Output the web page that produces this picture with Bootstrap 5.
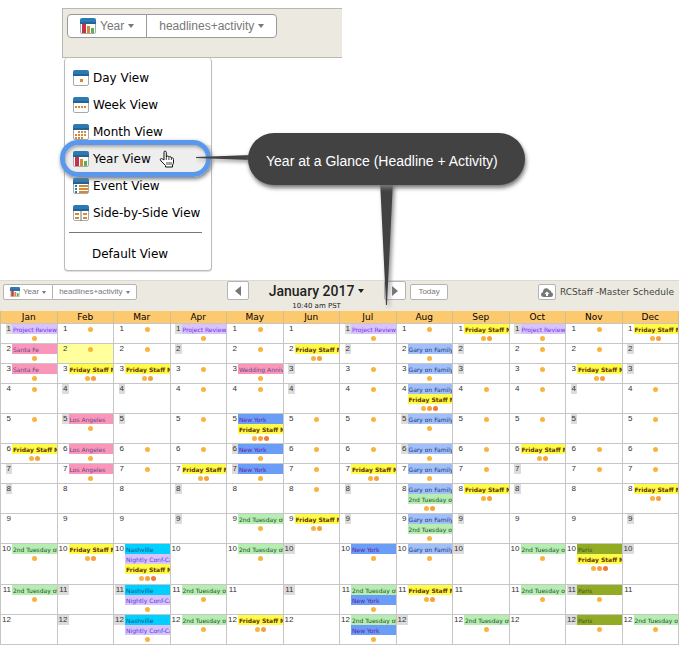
<!DOCTYPE html>
<html lang="en">
<head>
<meta charset="utf-8">
<meta name="viewport" content="width=device-width, initial-scale=1">
<title>Year at a Glance</title>
<link href="https://cdn.jsdelivr.net/npm/bootstrap@5.3.0/dist/css/bootstrap.min.css" rel="stylesheet">
<style>
body{font-family:"DejaVu Sans",sans-serif;color:#000;background:#fff}
.demo-area{padding:8px 0 9px 62px}
.demo-strip{width:280px;height:50px;padding:5px 4px;background:#eceae0;border:1px solid #b9b9b1;border-right:0}
.tool-btn{--bs-btn-padding-x:12px;--bs-btn-padding-y:0px;--bs-btn-font-size:12px;--bs-btn-line-height:22px;--bs-btn-border-radius:4px;
  --bs-btn-color:#777;--bs-btn-bg:#fff;--bs-btn-border-color:#999;--bs-btn-hover-bg:#f4f4f4;--bs-btn-hover-color:#555;--bs-btn-hover-border-color:#888;
  font-family:"Liberation Sans",Arial,sans-serif;display:inline-flex;align-items:center;justify-content:center;gap:4px}
.tool-btn.mini{--bs-btn-padding-x:7px;--bs-btn-font-size:8px;--bs-btn-line-height:14px;--bs-btn-border-radius:2px;--bs-btn-border-color:#b4b4b4;gap:3px}
.btn-group .tool-btn.mini{--bs-btn-padding-x:6px}
.tool-btn.arrow-btn{--bs-btn-line-height:17px;--bs-btn-padding-x:0px;width:22px;height:19px}
.tool-btn.cloud-btn{--bs-btn-padding-x:0px;width:18px;height:16px}
.caret-mark{width:0;height:0;border:3px solid transparent;border-top:4px solid currentColor;border-bottom:0}
.mini .caret-mark{border-width:3px 2px 0}
.ico{width:16px;height:16px;flex:none}
.ico-mini{width:10px;height:10px;flex:none}
.view-menu{width:148px;margin-left:2px;padding:6px 0 3px;background:#fff;border:1px solid #bbb;border-top:0;border-radius:4px;font-size:12px;box-shadow:0 1px 1px #ddd}
.view-menu a{display:flex;align-items:center;gap:4px;height:27px;padding-left:8px;color:#000;text-decoration:none;white-space:nowrap;position:relative}
.view-menu hr{margin:6px 9px 7px 4px;border-top:1px solid #777;opacity:1}
.view-menu a.plain{padding-left:27px}
.view-menu a.picked{background:#eee;z-index:2}
.ring{position:absolute;left:-5px;right:0;top:-5px;bottom:-5px;border:5px solid #5a98ee;border-radius:18px;box-shadow:1px 2px 4px #777,inset 1px 2px 3px #aaa}
.hand{width:16px;height:18px;margin-left:4px}
.callout{position:absolute;left:248px;top:133px;z-index:4;padding:18px 27px 13px 18px;border-radius:26px;background:#424242;color:#fff;
  font:14px/21px "Liberation Sans",Arial,sans-serif;white-space:nowrap;box-shadow:1px 3px 4px #777}
.pointer{position:absolute;z-index:3;left:190px;top:150px;width:220px;height:160px;pointer-events:none;filter:drop-shadow(2px 2px 2px #888)}
.cal-wrap{margin-right:1px}
.cal-bar{background:#eceae0;border-top:1px solid #dcdad2;height:31px;padding:0 5px 0 3px}
.drop-1{margin-top:3px}
.cal-title{font:500 14px/20px Roboto,"Liberation Sans",sans-serif;color:#222}
.cal-time{font-size:7px;line-height:10px;color:#222}
.cal-owner{font-size:9px;line-height:16px;color:#444}
.year-grid{width:100%;table-layout:fixed;border-collapse:collapse}
.year-grid th{height:12px;padding:0;background:#fdc96f;border:1px solid #d3bd92;border-width:0 1px;font-size:9px;line-height:12px;font-weight:400;text-align:center}
.year-grid td{padding:0;border:1px solid #c6c6c6;vertical-align:top}
.cell-in{display:flex;min-height:19px}
.h-mid .cell-in{min-height:29px}
.h-tall .cell-in{min-height:40px}
.day-no{width:11px;flex:none;text-align:right;font:8px/10px "Liberation Sans",Arial,sans-serif;color:#333}
.day-no span{display:inline-block;padding:0 1px}
.weekend .day-no span{background:#dcdcdc}
.today{background:#ffff9c}
.cell-body{flex:1;min-width:0}
.ev{height:10px;padding-left:1px;font-size:6px;line-height:11px;white-space:nowrap;overflow:hidden}
.ev-project{background:#dac3fb;color:#6637ee}
.ev-conf{background:#dac3fb;color:#4b3be6}
.ev-trip{background:#fb96bb;color:#644982}
.ev-staff{background:#fefc48;color:#633500;font-weight:700}
.ev-gary{background:#a1c0f9;color:#1e3472}
.ev-ny{background:#6a9df8;color:#6222a2}
.ev-tue{background:#b6edb1;color:#234c32}
.ev-nash{background:#00d0ff;color:#174a86}
.ev-paris{background:#91ac24;color:#364f20}
.dots{display:flex;justify-content:center;align-items:center;gap:1px;height:9px}
.dots i{width:5px;height:5px;border-radius:50%;background:#f9b440}
.dots i:nth-child(2){background:#f6a03c}
.dots i:nth-child(3){background:#ef7b37}
.dots:first-child{height:11px}
</style>
<script src="https://cdn.jsdelivr.net/npm/bootstrap@5.3.0/dist/js/bootstrap.bundle.min.js"></script>
</head>
<body>
<svg class="d-none" aria-hidden="true">
  <symbol id="i-frame" viewBox="0 0 16 16"><rect x=".5" y="1.5" width="15" height="14" rx="1.5" fill="#fff" stroke="#a9a9a9"/><path d="M0 6V2Q0 0 2 0H14Q16 0 16 2V6Z" fill="#2c7ab2"/><path d="M0 4H16V6H0Z" fill="#236492"/></symbol>
  <symbol id="i-day" viewBox="0 0 16 16"><use href="#i-frame"/><path d="M7 9h3v3H7z" fill="#d18a3c"/></symbol>
  <symbol id="i-week" viewBox="0 0 16 16"><use href="#i-frame"/><path d="M2 9h2v2H2zM5 9h2v2H5zM8 9h2v2H8zM11 9h2v2h-2z" fill="#d18a3c"/></symbol>
  <symbol id="i-month" viewBox="0 0 16 16"><use href="#i-frame"/><path d="M5 7h2v2H5zM8 7h2v2H8zM11 7h2v2h-2zM2 10h2v2H2zM5 10h2v2H5zM8 10h2v2H8zM11 10h2v2h-2zM2 13h2v2H2zM5 13h2v2H5zM8 13h2v2H8z" fill="#d18a3c"/></symbol>
  <symbol id="i-year" viewBox="0 0 16 16"><use href="#i-frame"/><path d="M2 6h4v9H2z" fill="#c5304c"/><path d="M7 8h3v7H7z" fill="#d18a3c"/><path d="M11 10h3v5h-3z" fill="#55b548"/></symbol>
  <symbol id="i-event" viewBox="0 0 16 16"><use href="#i-frame"/><path d="M2 7h2v2H2zM2 10h2v2H2zM2 13h2v2H2z" fill="#2c7ab2"/><path d="M6 7h9v2H6zM6 10h9v2H6zM6 13h9v2H6z" fill="#d18a3c"/></symbol>
  <symbol id="i-side" viewBox="0 0 16 16"><use href="#i-frame"/><path d="M7.5 6h1v10h-1z" fill="#777"/><path d="M2 8h4v2H2zM2 12h4v2H2zM10 8h4v2h-4zM10 12h4v2h-4z" fill="#d18a3c"/></symbol>
</svg>

<main class="position-relative">
  <section class="demo-area">
    <div class="demo-strip">
      <div class="btn-group align-top">
        <button type="button" class="btn tool-btn"><svg class="ico"><use href="#i-year"/></svg>Year<span class="caret-mark"></span></button>
        <button type="button" class="btn tool-btn">headlines+activity<span class="caret-mark"></span></button>
      </div>
    </div>
    <nav class="view-menu" aria-label="Calendar view">
      <a href="#day"><svg class="ico"><use href="#i-day"/></svg>Day View</a>
      <a href="#week"><svg class="ico"><use href="#i-week"/></svg>Week View</a>
      <a href="#month"><svg class="ico"><use href="#i-month"/></svg>Month View</a>
      <a href="#year" class="picked"><span class="ring"></span><svg class="ico"><use href="#i-year"/></svg>Year View
        <svg class="hand" viewBox="0 0 16 18"><path d="M5 10V2.5Q5 1 6 1T7.300 2.500V7Q7.500 6 8.600 6T9.900 7.200Q10.200 6.500 11.200 6.700T12.400 8Q13 7.500 13.800 8T14.500 9.500V12Q14.500 14 13.500 15V17H6.500V15.500L2 11Q.8 9.500 1.600 8.800T3.500 9.100Z" fill="#fff" stroke="#111"/><path d="M7.300 7v3M9.900 7.500v2.500M12.400 8v2M8 12v3M10 12v3M12 12v3" stroke="#111" fill="none" stroke-width=".8"/></svg></a>
      <a href="#event"><svg class="ico"><use href="#i-event"/></svg>Event View</a>
      <a href="#side"><svg class="ico"><use href="#i-side"/></svg>Side-by-Side View</a>
      <hr>
      <a href="#default" class="plain">Default View</a>
    </nav>
  </section>

  <svg class="pointer" viewBox="0 0 220 160" aria-hidden="true"><path d="M6 7L62 5V10L6 8ZM190 30H203L197 155H196Z" fill="#424242"/></svg>
  <div class="callout">Year at a Glance (Headline + Activity)</div>

  <section class="cal-wrap">
    <header class="cal-bar d-flex justify-content-between align-items-start">
      <div class="btn-group drop-1">
        <button type="button" class="btn tool-btn mini"><svg class="ico-mini"><use href="#i-year"/></svg>Year<span class="caret-mark"></span></button>
        <button type="button" class="btn tool-btn mini">headlines+activity<span class="caret-mark"></span></button>
      </div>
      <div class="d-flex align-items-start">
        <button type="button" class="btn tool-btn mini arrow-btn" aria-label="Previous year"><svg width="6" height="10"><path d="M6 0V10L0 5Z" fill="#777"/></svg></button>
        <div class="text-center px-3 mx-1">
          <div class="cal-title d-flex align-items-center gap-1">January 2017<span class="caret-mark"></span></div>
          <div class="cal-time">10:40 am PST</div>
        </div>
        <button type="button" class="btn tool-btn mini arrow-btn" aria-label="Next year"><svg width="6" height="10"><path d="M0 0V10L6 5Z" fill="#777"/></svg></button>
        <button type="button" class="btn tool-btn mini ms-1 drop-1">Today</button>
      </div>
      <div class="d-flex gap-1 drop-1">
        <button type="button" class="btn tool-btn mini cloud-btn" aria-label="Upload"><svg width="12" height="9" viewBox="0 0 12 9"><path d="M3 9Q0 9 0 6.500Q0 4.500 2 4Q2 .5 5.200 .3Q7.500 .2 8.300 2.300Q10 2.200 10.300 4.200Q12 4.800 12 6.500Q12 9 9.500 9Z" fill="#777"/><path d="M6 3.500L8.500 6H7V8H5V6H3.500Z" fill="#fff"/></svg></button>
        <span class="cal-owner">RCStaff -Master Schedule</span>
      </div>
    </header>
    <table class="year-grid">
      <thead><tr id="months"></tr></thead>
      <tbody id="days"></tbody>
    </table>
  </section>
</main>

<script>
const kinds = {
  P:['project','Project Review'], S:['trip','Santa Fe'], L:['trip','Los Angeles'], W:['trip','Wedding Anniv'],
  F:['staff','Friday Staff M'], G:['gary','Gary on Family'], N:['ny','New York'],
  T:['tue','2nd Tuesday of'], V:['nash','Nashville'], C:['conf','Nightly Conf-Ca'], R:['paris','Paris']
};
// One string per day, one entry per month: "#" weekend, "!" today, letters are events, the digit is the activity count.
const rows = [
  '#P1,1,1,#P1,1,,#P1,1,F2,#P1,1,F2',
  'S1,!1,1,#,1,F2,#,G1,#,1,1,#',
  'S1,F2,F2,1,W1,#,1,G1,#,1,F2,#',
  '1,#,#,1,1,#,1,GF3,1,1,#,1',
  '1,#L1,#,1,NF3,1,1,#G1,1,1,#,1',
  'F2,L1,1,1,#N1,1,1,#G1,1,F2,1,1',
  '#,L1,1,F2,#N1,1,F2,G1,1,#,1,1',
  '#,,,#,,1,#,GT2,F2,#,,F2',
  ',,,#,T1,F2,#,GT1,#,,,#',
  'T1,F2,VCF3,,T1,#,N1,G1,#,T1,RF3,#',
  'T1,#,#VC1,T1,,#,TN1,F2,,T1,#R1,',
  ',#,#VC1,T1,F2,,TN1,#,T1,,#R1,T1'
];
const heights = ['','','','h-mid','h-mid','','','h-mid','h-mid','h-tall','h-mid','h-mid'];
document.getElementById('months').innerHTML =
  'Jan Feb Mar Apr May Jun Jul Aug Sep Oct Nov Dec'.split(' ').map(m => `<th scope="col">${m}</th>`).join('');
document.getElementById('days').innerHTML = rows.map((r, d) =>
  `<tr class="${heights[d]}">` + r.split(',').map(c => {
    const cls = c[0] === '#' ? 'weekend' : c[0] === '!' ? 'today' : '';
    const evs = c.replace(/[^A-Z]/g, '').split('').map(k => `<div class="ev ev-${kinds[k][0]}">${kinds[k][1]}</div>`).join('');
    const n = +c.replace(/\D/g, '');
    return `<td class="${cls}"><div class="cell-in"><div class="day-no"><span>${d + 1}</span></div><div class="cell-body">${evs}${n ? `<div class="dots">${'<i></i>'.repeat(n)}</div>` : ''}</div></div></td>`;
  }).join('') + '</tr>').join('');
</script>
</body>
</html>
